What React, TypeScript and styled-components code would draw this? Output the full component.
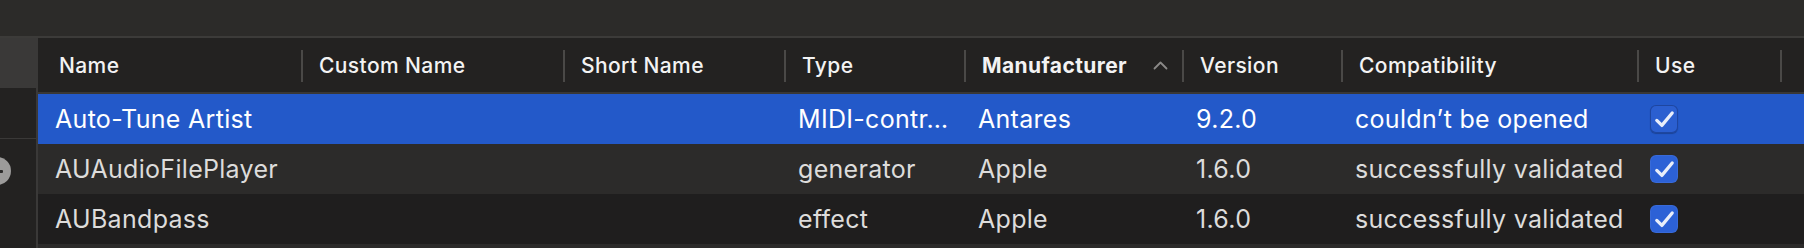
import React from 'react';
import styled, { createGlobalStyle, css } from 'styled-components';

const Global = createGlobalStyle`
  html, body { margin: 0; padding: 0; background: #1f1e1e; }
  body { font-family: Inter, "Noto Sans", sans-serif; -webkit-font-smoothing: antialiased; }
  * { box-sizing: border-box; }
`;

const COLS = [264, 262, 221, 180, 218, 159, 296, 143, 23];
const gridCols = COLS.map((c) => `${c}px`).join(' ');

const Window = styled.div`
  width: 1804px;
  height: 248px;
  overflow: hidden;
  display: flex;
  flex-direction: column;
  background: #1f1e1e;
`;

const TopBar = styled.div`
  flex: none;
  height: 38px;
  background: #2c2b29;
  border-bottom: 2px solid #3c3b39;
`;

const Body = styled.div`
  flex: 1;
  min-height: 0;
  display: flex;
`;

const Sidebar = styled.div`
  flex: none;
  width: 38px;
  border-right: 2px solid #3a3938;
  background: #232221;
  display: flex;
  flex-direction: column;
  overflow: hidden;
`;

const SideTab = styled.div`
  height: 50px;
  background: #3a3938;
`;

const SideItem = styled.div`
  height: 51px;
  border-bottom: 1px solid #3a3938;
`;

const SideRest = styled.div`
  flex: 1;
  padding-top: 18px;
`;

const RoundButton = styled.div`
  width: 28px;
  height: 28px;
  border-radius: 50%;
  background: #9c9b9a;
  margin-left: -17px;
  display: flex;
  align-items: center;
  justify-content: center;
  &::before {
    content: '';
    width: 12px;
    height: 3px;
    border-radius: 1px;
    background: #2b2a29;
  }
`;

const Table = styled.div`
  flex: 1;
  display: flex;
  flex-direction: column;
  min-width: 0;
`;

const HeaderRow = styled.div`
  flex: none;
  display: grid;
  grid-template-columns: ${gridCols};
  height: 56px;
  background: #232221;
  border-bottom: 2px solid #393837;
`;

const HeaderCell = styled.div<{ $first?: boolean; $bold?: boolean; $noSep?: boolean }>`
  position: relative;
  display: flex;
  align-items: center;
  padding-left: ${(p) => (p.$first ? 21 : 17)}px;
  font-size: 21px;
  letter-spacing: 0.4px;
  font-weight: ${(p) => (p.$bold ? 700 : 500)};
  color: #f3f3f3;
  white-space: nowrap;
  ${(p) =>
    !p.$noSep &&
    css`
      &::after {
        content: '';
        position: absolute;
        right: -1px;
        top: 12px;
        width: 2px;
        height: 32px;
        background: #4a4947;
      }
    `}
`;

const SortChevron = styled.svg`
  margin-left: auto;
  margin-right: 15px;
  width: 15px;
  height: 9px;
`;

const Row = styled.div<{ $variant: 'selected' | 'even' | 'odd' }>`
  flex: none;
  display: grid;
  grid-template-columns: ${gridCols};
  height: 50px;
  background: ${(p) =>
    p.$variant === 'selected' ? '#2359c9' : p.$variant === 'even' ? '#2c2b2a' : '#1f1e1e'};
  color: ${(p) => (p.$variant === 'selected' ? '#ffffff' : '#dddcdb')};
`;

const Cell = styled.div<{ $first?: boolean; $pad?: number }>`
  display: flex;
  align-items: center;
  min-width: 0;
  padding-left: ${(p) => (p.$pad !== undefined ? p.$pad : p.$first ? 17 : 13)}px;
  padding-right: 14px;
  font-size: 25px;
  letter-spacing: 0.3px;
  font-weight: 400;
  white-space: nowrap;
  overflow: hidden;
`;

const CellText = styled.span`
  overflow: hidden;
  text-overflow: ellipsis;
`;

const CheckBox = styled.div<{ $onSelected?: boolean }>`
  width: 28px;
  height: 28px;
  border-radius: 6px;
  background: ${(p) => (p.$onSelected ? '#2b5fd0' : '#2c61d6')};
  box-shadow: ${(p) =>
    p.$onSelected
      ? 'inset 0 0 0 1px rgba(20, 50, 120, 0.55), 0 1px 1px rgba(0,0,0,0.25)'
      : 'inset 0 0 0 1px rgba(255,255,255,0.06)'};
  display: flex;
  align-items: center;
  justify-content: center;
  flex: none;
`;

const Check = () => (
  <svg width="21" height="19" viewBox="0 0 21 19">
    <path
      d="M2.8 10.4 L7.9 15.4 L18.2 3.0"
      fill="none"
      stroke="#e9eefa"
      strokeWidth="3.3"
      strokeLinecap="round"
      strokeLinejoin="round"
    />
  </svg>
);

type Plugin = {
  name: string;
  type: string;
  manufacturer: string;
  version: string;
  compat: string;
  variant: 'selected' | 'even' | 'odd';
};

const plugins: Plugin[] = [
  { name: 'Auto-Tune Artist', type: 'MIDI-contr…', manufacturer: 'Antares', version: '9.2.0', compat: 'couldn’t be opened', variant: 'selected' },
  { name: 'AUAudioFilePlayer', type: 'generator', manufacturer: 'Apple', version: '1.6.0', compat: 'successfully validated', variant: 'even' },
  { name: 'AUBandpass', type: 'effect', manufacturer: 'Apple', version: '1.6.0', compat: 'successfully validated', variant: 'odd' },
];

export default function App() {
  return (
    <>
      <Global />
      <Window>
        <TopBar />
        <Body>
          <Sidebar>
            <SideTab />
            <SideItem />
            <SideRest>
              <RoundButton />
            </SideRest>
          </Sidebar>
          <Table>
            <HeaderRow>
              <HeaderCell $first>Name</HeaderCell>
              <HeaderCell>Custom Name</HeaderCell>
              <HeaderCell>Short Name</HeaderCell>
              <HeaderCell>Type</HeaderCell>
              <HeaderCell $bold>
                Manufacturer
                <SortChevron viewBox="0 0 15 9">
                  <path d="M1.5 7.5 L7.5 1.5 L13.5 7.5" fill="none" stroke="#8a8987" strokeWidth="1.8" strokeLinecap="round" strokeLinejoin="round" />
                </SortChevron>
              </HeaderCell>
              <HeaderCell>Version</HeaderCell>
              <HeaderCell>Compatibility</HeaderCell>
              <HeaderCell>Use</HeaderCell>
              <HeaderCell $noSep />
            </HeaderRow>
            {plugins.map((p) => (
              <Row key={p.name} $variant={p.variant}>
                <Cell $first><CellText>{p.name}</CellText></Cell>
                <Cell />
                <Cell />
                <Cell><CellText>{p.type}</CellText></Cell>
                <Cell><CellText>{p.manufacturer}</CellText></Cell>
                <Cell><CellText>{p.version}</CellText></Cell>
                <Cell><CellText>{p.compat}</CellText></Cell>
                <Cell $pad={12}>
                  <CheckBox $onSelected={p.variant === 'selected'}>
                    <Check />
                  </CheckBox>
                </Cell>
                <Cell />
              </Row>
            ))}
            <Row $variant="even" />
          </Table>
        </Body>
      </Window>
    </>
  );
}
